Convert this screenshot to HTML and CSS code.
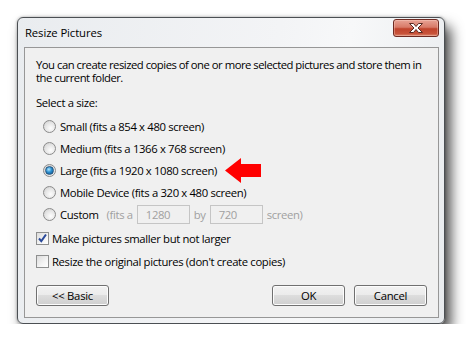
FILE: index.html
```html
<!DOCTYPE html>
<html lang="en">

<head>
    <meta charset="UTF-8">
    <meta name="viewport" content="width=device-width, initial-scale=1.0">
    <title>Resize Pictures</title>
    <link rel="stylesheet" href="styles.css">
</head>

<body>
    <div class="window">
        <div class="titlebar">
            <span class="title">Resize Pictures</span>
            <button class="close">
                <svg width="18" height="12" viewBox="0 0 18 12">
                    <path d="M2.5 1.5h4l2.5 3 2.5-3h4l-4.5 4.5 4.5 4.5h-4l-2.5-3-2.5 3h-4l4.5-4.5z" fill="#fff" stroke="#5a2a22" stroke-width="1" stroke-linejoin="round"/>
                </svg>
            </button>
        </div>
        <div class="panel">
            <p class="intro">You can create resized copies of one or more selected pictures and store them in the current folder.</p>
            <p class="label">Select a size:</p>
            <div class="sizes">
                <div class="row"><span class="radio"></span>Small (fits a 854 x 480 screen)</div>
                <div class="row"><span class="radio"></span>Medium (fits a 1366 x 768 screen)</div>
                <div class="row"><span class="radio checked"></span>Large (fits a 1920 x 1080 screen)
                    <svg class="arrow" width="36" height="25" viewBox="0 0 36 25">
                        <polygon points="0,12.5 16,0 16,6 36,6 36,19 16,19 16,25" fill="#f00"/>
                    </svg>
                </div>
                <div class="row"><span class="radio"></span>Mobile Device (fits a 320 x 480 screen)</div>
                <div class="row"><span class="radio"></span>Custom
                    <span class="muted fits">(fits a</span>
                    <span class="field">1280</span>
                    <span class="muted">by</span>
                    <span class="field">720</span>
                    <span class="muted">screen)</span>
                </div>
            </div>
            <div class="options">
                <div class="row"><span class="check checked">
                    <svg width="11" height="11" viewBox="0 0 11 11">
                        <path d="M2 5.5l2.3 2.6L9 1.5" fill="none" stroke="#2a4a9a" stroke-width="2"/>
                    </svg>
                </span>Make pictures smaller but not larger</div>
                <div class="row"><span class="check"></span>Resize the original pictures (don't create copies)</div>
            </div>
            <div class="actions">
                <button class="btn">&lt;&lt; Basic</button>
                <div class="right">
                    <button class="btn">OK</button>
                    <button class="btn">Cancel</button>
                </div>
            </div>
        </div>
    </div>
</body>

</html>
```

FILE: styles.css
```css
* {
    margin: 0;
    padding: 0;
    box-sizing: border-box;
}

body {
    background: #fff;
    font-family: "Open Sans", sans-serif;
    font-size: 11.3px;
    letter-spacing: -0.35px;
    color: #000;
}

.window {
    width: 428px;
    height: 307px;
    margin: 17px 0 0 17px;
    border: 1px solid #4b4f53;
    border-radius: 6px;
    padding: 0 5px 5px 6px;
    background: linear-gradient(100deg, #e9ecef 0%, #f3f4f6 55%, #f7f8f9 70%, #e8ebee 100%);
    box-shadow: 6px 9px 13px rgba(0, 0, 0, 0.7), 0 0 3px rgba(0, 0, 0, 0.35);
    display: flex;
    flex-direction: column;
}

.titlebar {
    height: 29px;
    display: flex;
    justify-content: space-between;
    align-items: flex-start;
}

.title {
    margin-top: 7px;
    margin-left: 1px;
    letter-spacing: -0.1px;
    color: #000;
}

.close {
    width: 46px;
    height: 18px;
    margin-top: 1px;
    border: 1px solid #6e2a22;
    border-radius: 3px;
    background: linear-gradient(#e8a395 0%, #d87a68 45%, #c0432c 55%, #c8533a 85%, #dc8a72 100%);
    display: flex;
    justify-content: center;
    align-items: center;
    box-shadow: inset 0 0 0 1px rgba(255, 220, 210, 0.35);
}

.close svg {
    display: block;
}

.panel {
    flex: 1;
    background: #f0f0f0;
    border: 1px solid #979797;
    padding: 10px 11px 0 11px;
    line-height: 13px;
}

.intro {
    letter-spacing: -0.5px;
}

.label {
    margin-top: 12px;
}

.sizes {
    margin-top: 6px;
    padding-left: 7px;
}

.row {
    display: flex;
    align-items: center;
    height: 22px;
    white-space: nowrap;
}

.radio {
    width: 13px;
    height: 13px;
    border-radius: 50%;
    border: 1px solid #8b8b8b;
    background: radial-gradient(circle at 60% 65%, #fdfdfd 0%, #e4e4e4 55%, #c9c9c9 100%);
    margin-right: 4px;
    display: flex;
    justify-content: center;
    align-items: center;
}

.radio.checked::after {
    content: "";
    width: 7px;
    height: 7px;
    border-radius: 50%;
    background: radial-gradient(circle at 40% 35%, #b4e8ff 0%, #2a8fd0 45%, #0d4f86 100%);
    border: 1px solid #27557e;
}

.arrow {
    margin-left: 8px;
}

.muted {
    color: #a0a0a0;
}

.fits {
    margin-left: 8px;
}

.field {
    width: 53px;
    height: 19px;
    border: 1px solid #c5c5c5;
    background: #f0f0f0;
    color: #a0a0a0;
    padding-left: 8px;
    line-height: 17px;
    margin: 0 4px;
}

.options {
    margin-top: 2px;
}

.options .row {
    height: 23px;
}

.check {
    width: 13px;
    height: 13px;
    border: 1px solid #8e8f8f;
    background: linear-gradient(135deg, #dcdcdc 0%, #f4f4f4 60%, #fff 100%);
    margin-right: 3px;
    display: flex;
    justify-content: center;
    align-items: center;
}

.check svg {
    display: block;
}

.actions {
    margin-top: 12px;
    display: flex;
    justify-content: space-between;
}

.right {
    display: flex;
    gap: 9px;
}

.btn {
    width: 73px;
    height: 21px;
    border: 1px solid #707070;
    border-radius: 3px;
    background: linear-gradient(#f2f2f2 0%, #ebebeb 50%, #dddddd 50%, #cfcfcf 100%);
    box-shadow: inset 0 0 0 1px #fcfcfc;
    font-family: "Open Sans", sans-serif;
    font-size: 11.3px;
    letter-spacing: -0.25px;
    color: #000;
}
```
